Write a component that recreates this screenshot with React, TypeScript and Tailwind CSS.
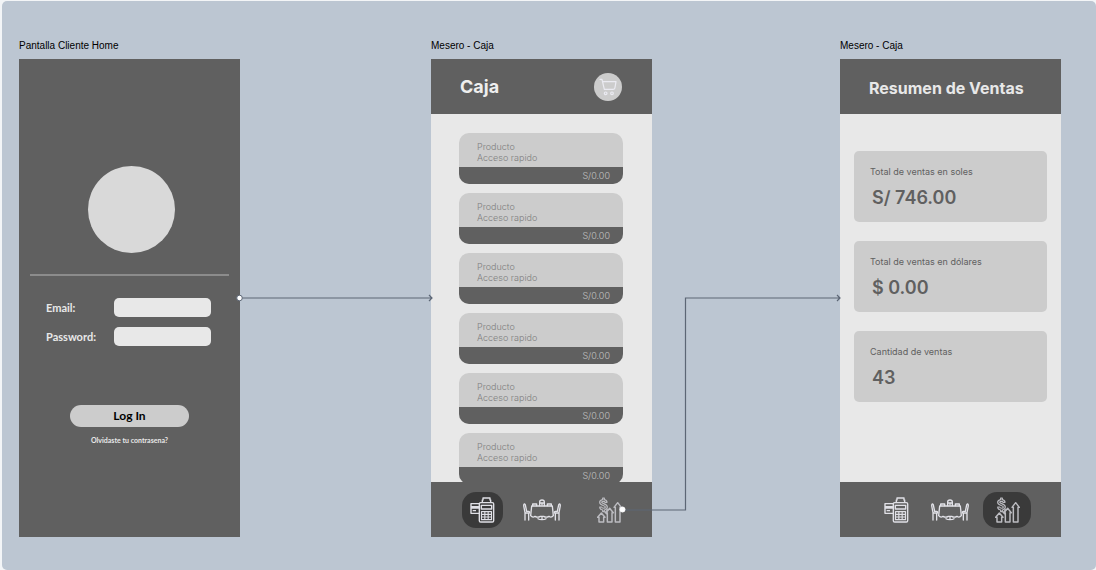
import type { ReactNode } from "react";
import clsx from "clsx";

function TerminalIcon() {
  return (
    <svg viewBox="0 0 75 78" className="h-[26px] w-[25px]" fill="none" stroke="#e0e0e6" strokeWidth="4.2" strokeLinejoin="round" aria-hidden="true">
      <path d="M27 20H3V49H27M3 29H27M3 33H27M8 41H18" />
      <rect x="28" y="17" width="43" height="58" rx="4" />
      <path d="M37 17V9H39V3H60V9H62V17" />
      <rect x="34" y="25" width="31" height="11" />
      <path d="M34.500 44H64.500V68H34.500ZM44.500 44V68M54.500 44V68M35 52H64M35 60H64" strokeWidth="3.4" />
    </svg>
  );
}

function TableIcon() {
  return (
    <svg viewBox="0 0 114 66" className="h-[22px] w-[38px]" fill="none" stroke="#e2e2e8" strokeWidth="4" strokeLinejoin="round" strokeLinecap="round" aria-hidden="true">
      <path d="M6 63V41L2 20C2 14 6 13 7 18L11 37H17C21 37 21 43 17 43V63M7 42H17" />
      <path d="M108 63V41L112 20C112 14 108 13 107 18L103 37H97C93 37 93 43 97 43V63M107 42H97" />
      <path d="M26 21H88L91 50C87 55 82 55 78 52C73 55 67 55 62 52H52C47 55 41 55 36 52C32 55 27 55 23 50Z" />
      <path d="M57 53V61M45 59C50 63 64 63 69 59" />
      <path d="M29 20V15H41V20M73 20V15H85V20M50 20V9C50 1 64 1 64 9V20M50 12H64M57 12V18" />
    </svg>
  );
}

function SalesIcon() {
  return (
    <svg viewBox="0 0 75 78" className="h-[26px] w-[25px]" fill="none" stroke="#bcbcc1" strokeWidth="4.4" strokeLinejoin="round" strokeLinecap="round" aria-hidden="true">
      <path d="M17 3H22V8C27 9 30 12 30 16H24C23 12 14 12 14 16C14 21 31 19 31 30C31 35 28 38 22 39V44H17V39C11 38 8 35 8 30H14C15 35 25 35 25 30C25 24 8 27 8 16C8 12 12 9 17 8Z" strokeWidth="3.6" />
      <path d="M2 61L13 48L24 61H20V75H6V61Z" />
      <path d="M27 47L38 34L49 47H45V75H31V47Z" />
      <path d="M51 31L62 17L73 31H69V75H55V31Z" />
      <path d="M24 45L29 50M32 38L28 43" />
    </svg>
  );
}

function CartIcon() {
  return (
    <svg viewBox="0 0 54 54" className="size-[18px]" fill="none" stroke="#ebebf2" strokeWidth="3.6" strokeLinejoin="round" strokeLinecap="round" aria-hidden="true">
      <path d="M3 4H9L16 34H43C46 34 48 31 48 28L51 11H11" />
      <circle cx="20" cy="46" r="4" />
      <circle cx="39" cy="46" r="4" />
    </svg>
  );
}

function Artboard({ name, place, children }: { name: string; place: string; children: ReactNode }) {
  return (
    <section className={clsx("absolute w-[221px]", place)}>
      <h2 className="mb-[7px] font-['Liberation_Sans',sans-serif] text-[10px] leading-3 whitespace-nowrap text-black">{name}</h2>
      <div className="flex h-[478px] flex-col overflow-hidden bg-[#e8e8e8] font-['Inter',sans-serif]">{children}</div>
    </section>
  );
}

function LoginScreen() {
  return (
    <form className="flex flex-1 flex-col bg-[#606060] px-[11px] font-['Lato',sans-serif] font-bold text-[#e8e8e8]" onSubmit={(e) => e.preventDefault()}>
      <div className="mt-[107px] ml-[58px] size-[87px] rounded-full bg-[#d9d9d9]" />
      <hr className="mt-[21px] border-0 border-t-2 border-[#8c8c8c]" />
      <div className="mt-[22px] grid grid-cols-[68px_1fr] items-center gap-y-[10px] pr-[18px] pl-4 text-[11px] leading-4">
        <label htmlFor="email">Email:</label>
        <input id="email" type="email" className="h-[19px] w-full rounded-[5px] bg-[#e8e8e8] px-2 text-[10px] text-black" />
        <label htmlFor="password">Password:</label>
        <input id="password" type="password" className="h-[19px] w-full rounded-[5px] bg-[#e8e8e8] px-2 text-[10px] text-black" />
      </div>
      <button type="submit" className="mt-[59px] h-[22px] w-[119px] self-center rounded-full bg-[#cccccc] text-[12px] leading-4 text-black">
        Log In
      </button>
      <a href="#recuperar" className="mt-2 self-center text-[7px] leading-[10px]">
        Olvidaste tu contrasena?
      </a>
    </form>
  );
}

type Tab = "caja" | "ventas";

function NavBar({ active }: { active: Tab }) {
  const caja = active === "caja";
  return (
    <nav className={clsx("z-10 flex h-[55px] shrink-0 items-center bg-[#606060]", caja ? "pl-[31px]" : "pl-11")}>
      <button type="button" aria-label="Caja" className={clsx("flex h-9 items-center justify-center", caja && "w-[41px] rounded-[14px] bg-[#3a3a3a]")}>
        <TerminalIcon />
      </button>
      <button type="button" aria-label="Mesas" className={caja ? "ml-5" : "ml-[22px]"}>
        <TableIcon />
      </button>
      <button type="button" aria-label="Ventas" className={clsx("flex h-9 items-center justify-center", caja ? "ml-9" : "ml-[14px] w-12 rounded-[14px] bg-[#3a3a3a]")}>
        <SalesIcon />
      </button>
    </nav>
  );
}

function ProductCard() {
  return (
    <li className="shrink-0 overflow-hidden rounded-[10px] bg-[#cccccc] text-[9px] leading-[11px] font-light">
      <p className="px-[18px] pt-2 pb-1 text-[#808080]">
        Producto
        <br />
        Acceso rapido
      </p>
      <p className="bg-[#606060] py-[3px] pr-[13px] text-right text-[#c4c4c4]">S/0.00</p>
    </li>
  );
}

function CajaScreen() {
  return (
    <>
      <header className="flex h-[55px] shrink-0 items-center justify-between bg-[#606060] pr-[30px] pl-[29px]">
        <h1 className="text-[18px] leading-6 font-bold text-[#eeeeee]">Caja</h1>
        <button type="button" aria-label="Carrito" className="flex size-7 items-center justify-center rounded-full bg-[#cccccc]">
          <CartIcon />
        </button>
      </header>
      <ul className="flex min-h-0 flex-1 flex-col gap-[9px] overflow-hidden pt-[19px] pr-[29px] pl-[28px]">
        {[1, 2, 3, 4, 5, 6].map((id) => (
          <ProductCard key={id} />
        ))}
      </ul>
      <NavBar active="caja" />
    </>
  );
}

const totals = [
  { label: "Total de ventas en soles", value: "S/ 746.00" },
  { label: "Total de ventas en dólares", value: "$ 0.00" },
  { label: "Cantidad de ventas", value: "43" },
];

function VentasScreen() {
  return (
    <>
      <header className="flex h-[55px] shrink-0 items-center bg-[#606060] px-[29px] pt-[2px]">
        <h1 className="text-[16px] leading-6 font-bold whitespace-nowrap text-[#e8e8e8]">Resumen de Ventas</h1>
      </header>
      <dl className="flex flex-1 flex-col gap-[19px] px-[14px] pt-[37px]">
        {totals.map((t) => (
          <div key={t.label} className="rounded-[5px] bg-[#cccccc] px-4 pt-[15px] pb-3 text-[#606060]">
            <dt className="text-[9px] leading-3">{t.label}</dt>
            <dd className="mt-2 pl-[2px] text-[18px] leading-6 font-semibold">{t.value}</dd>
          </div>
        ))}
      </dl>
      <NavBar active="ventas" />
    </>
  );
}

function Connectors() {
  return (
    <svg className="pointer-events-none absolute top-0 left-0 z-20" width="1060" height="560" fill="none" stroke="#5c6675" aria-hidden="true">
      <path d="M239 296.500H430M427 293.500L430 296.500L427 299.500M621 508.500H683.500V296.500H838M835 293.500L838 296.500L835 299.500" strokeWidth="1.2" transform="translate(0 0.500)" />
      <circle cx="237.500" cy="297" r="2.800" fill="#fff" />
      <circle cx="620.500" cy="508.500" r="2.500" fill="#fff" stroke="#ffffff" />
    </svg>
  );
}

export default function App() {
  return (
    <div className="flex h-screen min-h-[560px] bg-[#f3f5f7] pt-px pl-[2px]">
      <main className="relative flex-1 overflow-auto rounded-[5px] bg-[#bcc6d2]">
        <Artboard name="Pantalla Cliente Home" place="left-[17px] top-[39px]">
          <LoginScreen />
        </Artboard>
        <Artboard name="Mesero - Caja" place="left-[429px] top-[39px]">
          <CajaScreen />
        </Artboard>
        <Artboard name="Mesero - Caja" place="left-[838px] top-[39px]">
          <VentasScreen />
        </Artboard>
        <Connectors />
      </main>
    </div>
  );
}
